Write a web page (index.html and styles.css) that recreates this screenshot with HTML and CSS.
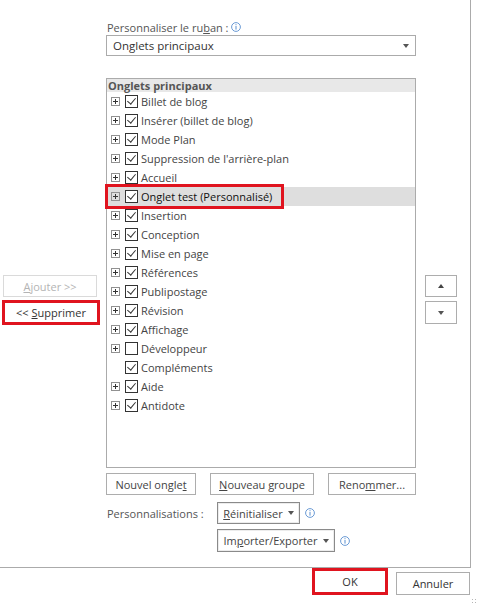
FILE: index.html
```html
<!DOCTYPE html>
<html lang="fr">
<head>
<meta charset="utf-8">
<title>Personnaliser le ruban</title>
<link rel="stylesheet" href="styles.css">
</head>
<body>
<div class="dialog">
  <div class="panel">
    <div class="left-col">
      <div class="btn btn-disabled"><span><u>A</u>jouter &gt;&gt;</span></div>
      <div class="btn btn-remove"><span>&lt;&lt; <u>S</u>upprimer</span></div>
    </div>
    <div class="center-col">
      <div class="caption"><span>Personnaliser le ru<u>b</u>an :</span><svg class="info" viewBox="0 0 10 10" width="10" height="10"><circle cx="5" cy="5" r="4.4" fill="none" stroke="#5a8fd0" stroke-width="0.9"/><rect x="4.5" y="2.2" width="1" height="1" fill="#5a8fd0"/><rect x="4.5" y="4" width="1" height="3.6" fill="#5a8fd0"/></svg></div>
      <div class="select"><span>Onglets principaux</span><span class="caret"></span></div>
      <div class="tree">
        <div class="tree-head">Onglets principaux</div>
        <div class="row"><span class="exp"></span><span class="cb on"></span><span class="lbl">Billet de blog</span></div>
        <div class="row"><span class="exp"></span><span class="cb on"></span><span class="lbl">Insérer (billet de blog)</span></div>
        <div class="row"><span class="exp"></span><span class="cb on"></span><span class="lbl">Mode Plan</span></div>
        <div class="row"><span class="exp"></span><span class="cb on"></span><span class="lbl">Suppression de l'arrière-plan</span></div>
        <div class="row"><span class="exp"></span><span class="cb on"></span><span class="lbl">Accueil</span></div>
        <div class="row selected"><span class="exp"></span><span class="cb on"></span><span class="lbl">Onglet test (Personnalisé)</span><span class="highlight"></span></div>
        <div class="row"><span class="exp"></span><span class="cb on"></span><span class="lbl">Insertion</span></div>
        <div class="row"><span class="exp"></span><span class="cb on"></span><span class="lbl">Conception</span></div>
        <div class="row"><span class="exp"></span><span class="cb on"></span><span class="lbl">Mise en page</span></div>
        <div class="row"><span class="exp"></span><span class="cb on"></span><span class="lbl">Références</span></div>
        <div class="row"><span class="exp"></span><span class="cb on"></span><span class="lbl">Publipostage</span></div>
        <div class="row"><span class="exp"></span><span class="cb on"></span><span class="lbl">Révision</span></div>
        <div class="row"><span class="exp"></span><span class="cb on"></span><span class="lbl">Affichage</span></div>
        <div class="row"><span class="exp"></span><span class="cb"></span><span class="lbl">Développeur</span></div>
        <div class="row"><span class="exp none"></span><span class="cb on"></span><span class="lbl">Compléments</span></div>
        <div class="row"><span class="exp"></span><span class="cb on"></span><span class="lbl">Aide</span></div>
        <div class="row"><span class="exp"></span><span class="cb on"></span><span class="lbl">Antidote</span></div>
      </div>
      <div class="btn-row">
        <div class="btn w90"><span>Nouvel ongle<u>t</u></span></div>
        <div class="btn w104"><span><u>N</u>ouveau groupe</span></div>
        <div class="btn w88"><span>Reno<u>m</u>mer...</span></div>
      </div>
      <div class="custom">
        <span class="custom-label">Personnalisations :</span>
        <div class="custom-line">
          <div class="btn btn-drop w83"><span><u>R</u>éinitialiser</span><span class="caret"></span></div>
          <svg class="info" viewBox="0 0 10 10" width="10" height="10"><circle cx="5" cy="5" r="4.4" fill="none" stroke="#5a8fd0" stroke-width="0.9"/><rect x="4.5" y="2.2" width="1" height="1" fill="#5a8fd0"/><rect x="4.5" y="4" width="1" height="3.6" fill="#5a8fd0"/></svg>
        </div>
        <span></span>
        <div class="custom-line">
          <div class="btn btn-drop tall w118"><span>Im<u>p</u>orter/Exporter</span><span class="caret"></span></div>
          <svg class="info" viewBox="0 0 10 10" width="10" height="10"><circle cx="5" cy="5" r="4.4" fill="none" stroke="#5a8fd0" stroke-width="0.9"/><rect x="4.5" y="2.2" width="1" height="1" fill="#5a8fd0"/><rect x="4.5" y="4" width="1" height="3.6" fill="#5a8fd0"/></svg>
        </div>
      </div>
    </div>
    <div class="right-col">
      <div class="btn arrow up"><span class="tri-up"></span></div>
      <div class="btn arrow down"><span class="caret"></span></div>
    </div>
  </div>
  <div class="footer">
    <div class="btn btn-ok"><span>OK</span></div>
    <div class="btn btn-cancel"><span>Annuler</span></div>
  </div>
  <div class="grip"></div>
</div>
</body>
</html>
```
FILE: styles.css
```css
* { box-sizing: border-box; }
html, body { margin: 0; padding: 0; background: #fff; }
body {
  font-family: "Open Sans", "Noto Sans", sans-serif;
  font-size: 11px;
  color: #444;
}
.dialog {
  position: relative;
  width: 478px;
  height: 605px;
  overflow: hidden;
}
.panel {
  width: 471px;
  height: 568px;
  border-right: 1px solid #ababab;
  border-bottom: 1px solid #ababab;
  display: grid;
  grid-template-columns: 100px 316px 41px;
  align-items: start;
}
u { text-decoration: underline; text-underline-offset: 1px; }

.btn {
  display: flex;
  align-items: center;
  justify-content: center;
  border: 1px solid #adadad;
  background: #fff;
  height: 22px;
  white-space: nowrap;
  color: #444;
}

/* left column */
.left-col {
  display: flex;
  flex-direction: column;
  padding-top: 275px;
  padding-left: 2px;
}
.btn-disabled {
  margin-left: 1px;
  width: 94px;
  color: #b4b4b4;
  border-color: #dadada;
}
.btn-remove {
  width: 98px;
  height: 25px;
  margin-top: 3px;
  border: 3px solid #e0141f;
  color: #333;
}

/* center column */
.center-col {
  padding-left: 6px;
  display: flex;
  flex-direction: column;
  padding-top: 19px;
}
.caption {
  height: 16px;
  display: flex;
  align-items: center;
  padding-left: 1px;
  color: #555;
}
.info { margin-left: 3px; flex: none; }
.select {
  height: 21px;
  border: 1px solid #ababab;
  display: flex;
  align-items: center;
  justify-content: space-between;
  padding: 0 6px 0 6px;
  color: #333;
  font-size: 11.5px;
}
.caret {
  width: 0; height: 0;
  border-left: 3.5px solid transparent;
  border-right: 3.5px solid transparent;
  border-top: 4px solid #555;
  display: inline-block;
}
.tri-up {
  width: 0; height: 0;
  border-left: 3.5px solid transparent;
  border-right: 3.5px solid transparent;
  border-bottom: 4px solid #444;
  display: inline-block;
}
.tree {
  margin-top: 22px;
  height: 390px;
  border: 1px solid #ababab;
  display: flex;
  flex-direction: column;
}
.tree-head {
  height: 13px;
  background: #e8e8e8;
  font-weight: 700;
  color: #555;
  padding-left: 1px;
  line-height: 13px;
}
.row {
  position: relative;
  height: 19px;
  display: flex;
  align-items: center;
  padding-left: 4px;
  color: #444;
}
.row.selected { background: #dedede; color: #111; }
.exp {
  width: 9px; height: 9px;
  border: 1px solid #919191;
  position: relative;
  flex: none;
}
.exp::before {
  content: "";
  position: absolute;
  left: 1px; top: 3px;
  width: 5px; height: 1px;
  background: #333;
}
.exp::after {
  content: "";
  position: absolute;
  left: 3px; top: 1px;
  width: 1px; height: 5px;
  background: #333;
}
.exp.none { border-color: transparent; }
.exp.none::before, .exp.none::after { display: none; }
.cb {
  width: 13px; height: 13px;
  margin-left: 5px;
  border: 1px solid #333;
  background: #fff;
  position: relative;
  flex: none;
}
.cb.on::after {
  content: "";
  position: absolute;
  left: 3px; top: 0px;
  width: 4px; height: 7px;
  border-right: 1.3px solid #333;
  border-bottom: 1.3px solid #333;
  transform: rotate(40deg);
}
.lbl { margin-left: 3px; white-space: nowrap; }
.highlight {
  position: absolute;
  left: -2px;
  top: -3px;
  width: 179px;
  height: 25px;
  border: 3px solid #e0141f;
}

.btn-row {
  margin-top: 5px;
  display: flex;
  justify-content: space-between;
}
.w90 { width: 90px; }
.w104 { width: 104px; }
.w88 { width: 88px; }
.w83 { width: 83px; }
.w118 { width: 118px; }

.custom {
  margin-top: 7px;
  display: grid;
  grid-template-columns: 111px auto;
  row-gap: 5px;
  align-items: center;
}
.custom-label { padding-left: 1px; color: #555; }
.custom-line { display: flex; align-items: center; }
.custom-line .info { margin-left: 5px; }
.btn-drop {
  border: 1px solid #8a8a8a;
  box-shadow: inset 0 0 0 1px #ececec;
  gap: 5px;
}
.btn-drop.tall { height: 23px; }

/* right column */
.right-col {
  padding-left: 9px;
  display: flex;
  flex-direction: column;
  padding-top: 275px;
}
.arrow { width: 32px; }
.arrow.down { margin-top: 4px; height: 23px; }

/* footer */
.footer {
  display: flex;
  justify-content: flex-end;
  align-items: flex-start;
  padding-right: 8px;
}
.btn-ok {
  width: 76px;
  height: 27px;
  border: 3px solid #e0141f;
  color: #333;
}
.btn-cancel {
  width: 74px;
  height: 23px;
  margin-left: 8px;
  margin-top: 4px;
  color: #333;
}
.grip {
  position: absolute;
  right: 1px;
  bottom: 1px;
  width: 6px;
  height: 6px;
  background-image: radial-gradient(circle, #b5b5b5 0.8px, transparent 1px);
  background-size: 3px 3px;
}
```
